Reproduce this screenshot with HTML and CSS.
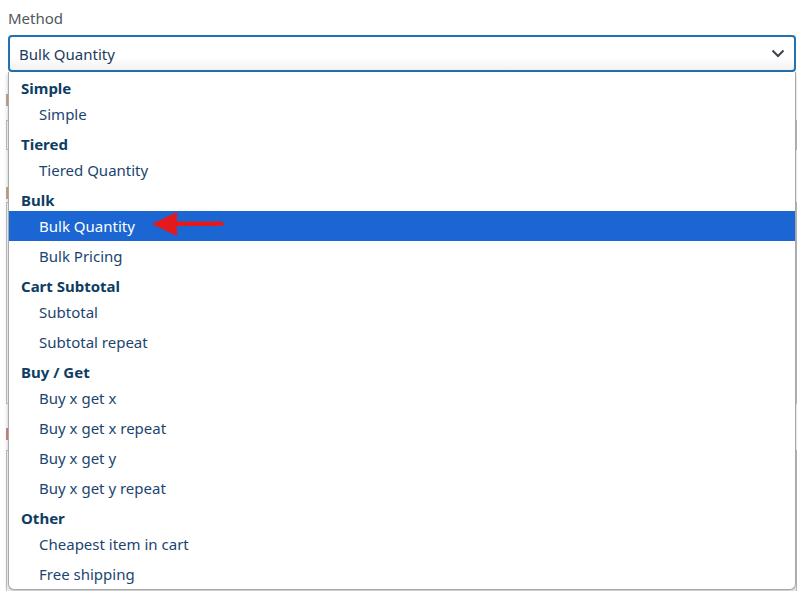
FILE: index.html
```html
<!DOCTYPE html>
<html>
<head>
<link rel="stylesheet" href="styles.css">
</head>
<body class="page">
  <div class="form">
    <div class="field">
      <div class="field_label">Method</div>
      <div class="select">
        <span class="select_value">Bulk Quantity</span>
        <svg class="chevron" width="14" height="9" viewBox="0 0 14 9"><path d="M1.5 1.5 L7 7 L12.5 1.5" fill="none" stroke="#3c434a" stroke-width="2"/></svg>
      </div>
    </div>

    <!-- fields under the open list, only their left edge shows -->
    <div class="under">
      <div class="under_mark m1"></div>
      <div class="under_input h28"></div>
      <div class="under_mark m2"></div>
      <div class="under_input h200"></div>
      <div class="under_mark m3 red"></div>
      <div class="under_input h150"></div>
    </div>

    <div class="list">
      <div class="group">Simple</div>
      <div class="opt">Simple</div>
      <div class="group">Tiered</div>
      <div class="opt">Tiered Quantity</div>
      <div class="group">Bulk</div>
      <div class="opt selected">Bulk Quantity
        <svg class="arrow" width="74" height="26" viewBox="0 0 74 26"><polygon points="0,12 25,0 25,24" fill="#e3191c"/><rect x="24" y="9.5" width="47" height="4.5" fill="#e3191c"/></svg>
      </div>
      <div class="opt">Bulk Pricing</div>
      <div class="group">Cart Subtotal</div>
      <div class="opt">Subtotal</div>
      <div class="opt">Subtotal repeat</div>
      <div class="group">Buy / Get</div>
      <div class="opt">Buy x get x</div>
      <div class="opt">Buy x get x repeat</div>
      <div class="opt">Buy x get y</div>
      <div class="opt">Buy x get y repeat</div>
      <div class="group">Other</div>
      <div class="opt">Cheapest item in cart</div>
      <div class="opt">Free shipping</div>
    </div>
  </div>
</body>
</html>
```

FILE: styles.css
```css
.page
{
  margin:0px;
  background-color:#ffffff;
  font-family:"Noto Sans","Open Sans","Liberation Sans",sans-serif;
  font-size:15px;
  overflow:hidden;
}
.form
{
  position:relative;
  padding:0px 0px 0px 8px;
  height:591px;
}
.field_label
{
  height:35px;
  line-height:36px;
  color:#50575e;
}
.select
{
  display:flex;
  align-items:center;
  justify-content:space-between;
  height:33px;
  margin-right:1px;
  padding:0px 9px 0px 9px;
  border:2px solid #2271b1;
  border-radius:4px;
  background:linear-gradient(#ffffff 60%, #f1f1f1);
  color:#1d3a5c;
}
.chevron
{
  display:block;
}
.under
{
  margin-left:-2px;
  margin-top:22px;
}
.under_mark
{
  width:3px;
  height:12px;
  background-color:#c8ad8a;
}
.under_mark.red
{
  background-color:#d08a8a;
}
.m1 { margin-bottom:14px; }
.m2 { margin-top:37px; margin-bottom:3px; }
.m3 { margin-top:24px; margin-bottom:10px; }
.under_input
{
  border:1px solid #c3c4c7;
}
.h28 { height:28px; }
.h200 { height:200px; }
.h150 { height:150px; }
.list
{
  position:absolute;
  left:8px;
  right:1px;
  top:72px;
  height:516px;
  background-color:#ffffff;
  border:1px solid #a7aaad;
  border-top:none;
  border-radius:0px 0px 6px 6px;
  box-shadow:0px 2px 4px rgba(0,0,0,0.25);
  padding-top:1px;
}
.group
{
  height:26px;
  line-height:30px;
  padding-left:12px;
  font-weight:bold;
  color:#0e3d63;
}
.opt
{
  position:relative;
  height:30px;
  line-height:30px;
  padding-left:30px;
  color:#1b4570;
}
.opt.selected
{
  background-color:#1b66d3;
  color:#ffffff;
}
.arrow
{
  position:absolute;
  left:143px;
  top:1px;
}
```
